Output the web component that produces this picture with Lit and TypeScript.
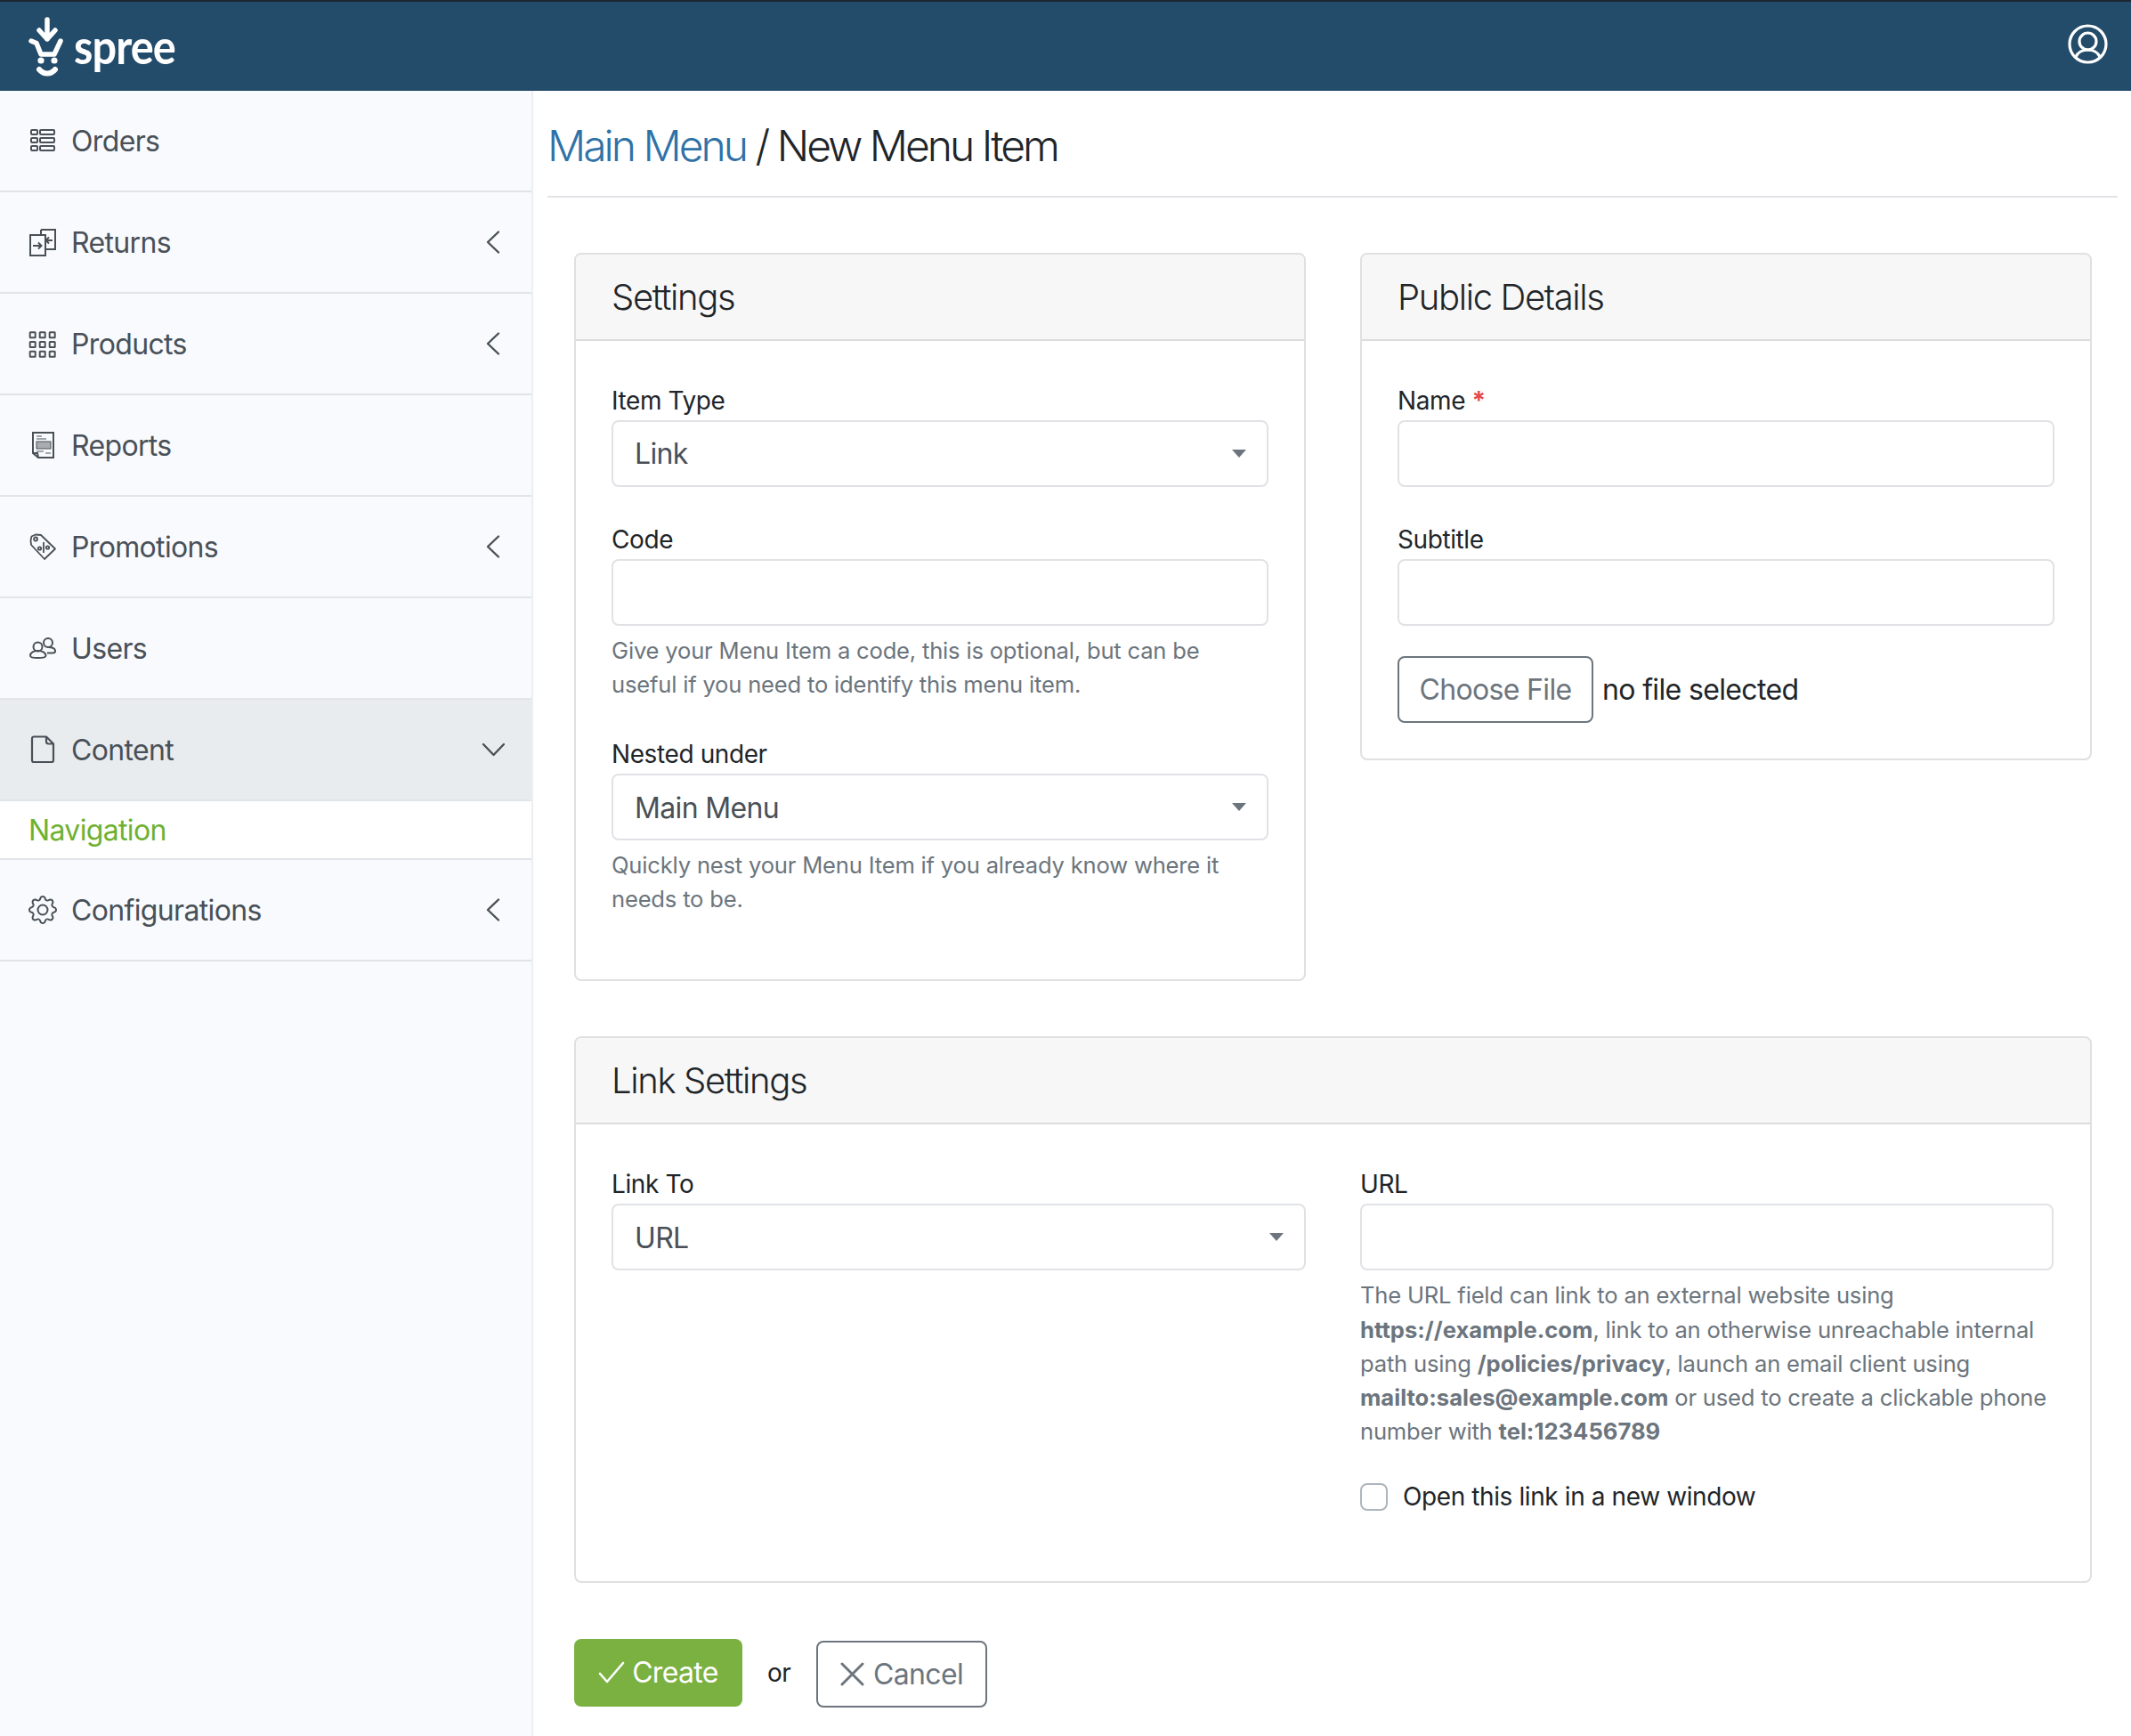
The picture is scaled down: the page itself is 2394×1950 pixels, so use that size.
import { LitElement, html, svg, css } from 'lit';
import { customElement } from 'lit/decorators.js';

// Icones do menu lateral, desenhados a 32x32
const icons: Record<string, unknown> = {
  orders: svg`<g fill="none" stroke="currentColor" stroke-width="2"><rect x="3" y="4" width="7" height="5" rx="1"/><rect x="13" y="4" width="16" height="5" rx="1"/><rect x="3" y="13" width="7" height="5" rx="1"/><rect x="13" y="13" width="16" height="5" rx="1"/><rect x="3" y="22" width="7" height="5" rx="1"/><rect x="13" y="22" width="16" height="5" rx="1"/></g>`,
  returns: svg`<g fill="none" stroke="currentColor" stroke-width="2"><path d="M14 2h16v22H19"/><path d="M14 2v6"/><rect x="2" y="8" width="17" height="23"/><path d="M5 20h9M11 16.500l3.500 3.500-3.500 3.500"/><path d="M27 14h-7M23 10.500 19.500 14l3.500 3.500"/></g>`,
  products: svg`<g fill="none" stroke="currentColor" stroke-width="2">
    ${[3.300, 14, 24.700].flatMap((y) => [1.700, 12.700, 23.700].map((x) => svg`<rect x=${x} y=${y} width="6" height="6" rx=".5"/>`))}
  </g>`,
  reports: svg`<g fill="none" stroke="currentColor" stroke-width="2"><path d="M5 2h23v28H11l-6-5z"/><path d="M5 25h5l1 5"/></g><g stroke="currentColor" stroke-width="1"><path d="M9 6h6M9 9h11M9 23h8M19 25h6"/><rect x="9" y="12" width="16" height="8" fill="currentColor" fill-opacity=".45"/></g>`,
  promotions: svg`<g fill="none" stroke="currentColor" stroke-width="1.800" stroke-linejoin="round"><path d="M3.500 4.500 8 2.500l6 .5L30 18.500 18 30 3 14l-.5-5z"/><circle cx="8" cy="7.500" r="2"/><path d="M17 11v12" /><circle cx="12.500" cy="18" r="1.700"/><circle cx="21.500" cy="17" r="1.700"/></g>`,
  users: svg`<g fill="none" stroke="currentColor" stroke-width="2"><circle cx="10.500" cy="14.500" r="5"/><path d="M2 24.500c0-3.500 4-5.500 8.500-5.500s9 2 9 5.500c0 2-3 2.500-9 2.500s-8.500-.5-8.500-2.500z"/><circle cx="22" cy="10" r="5"/><path d="M21 21.500h6c2.500 0 3.500-1 3-3-.8-2.500-4-3.500-7.500-3.500"/></g>`,
  content: svg`<path fill="none" stroke="currentColor" stroke-width="2.200" stroke-linejoin="round" d="M6 1.500h14l8 8V28a2 2 0 0 1-2 2H6a2 2 0 0 1-2-2V3.500a2 2 0 0 1 2-2zM20 1.500V7a2.500 2.500 0 0 0 2.500 2.500H28"/>`,
  configurations: svg`<g transform="scale(2)" fill="currentColor"><path d="M8 4.754a3.246 3.246 0 1 0 0 6.492 3.246 3.246 0 0 0 0-6.492zM5.754 8a2.246 2.246 0 1 1 4.492 0 2.246 2.246 0 0 1-4.492 0z"/><path d="M9.796 1.343c-.527-1.790-3.065-1.790-3.592 0l-.094.319a.873.873 0 0 1-1.255.520l-.292-.160c-1.640-.892-3.433.902-2.540 2.541l.159.292a.873.873 0 0 1-.520 1.255l-.319.094c-1.790.527-1.790 3.065 0 3.592l.319.094a.873.873 0 0 1 .520 1.255l-.160.292c-.892 1.640.901 3.434 2.541 2.540l.292-.159a.873.873 0 0 1 1.255.520l.094.319c.527 1.790 3.065 1.790 3.592 0l.094-.319a.873.873 0 0 1 1.255-.520l.292.160c1.640.893 3.434-.902 2.540-2.541l-.159-.292a.873.873 0 0 1 .520-1.255l.319-.094c1.790-.527 1.790-3.065 0-3.592l-.319-.094a.873.873 0 0 1-.520-1.255l.160-.292c.893-1.640-.902-3.433-2.541-2.540l-.292.159a.873.873 0 0 1-1.255-.520l-.094-.319zm-2.633.283c.246-.835 1.428-.835 1.674 0l.094.319a1.873 1.873 0 0 0 2.693 1.115l.291-.160c.764-.415 1.600.420 1.184 1.185l-.159.292a1.873 1.873 0 0 0 1.116 2.692l.318.094c.835.246.835 1.428 0 1.674l-.319.094a1.873 1.873 0 0 0-1.115 2.693l.160.291c.415.764-.420 1.600-1.185 1.184l-.291-.159a1.873 1.873 0 0 0-2.693 1.116l-.094.318c-.246.835-1.428.835-1.674 0l-.094-.319a1.873 1.873 0 0 0-2.692-1.115l-.292.160c-.764.415-1.600-.420-1.184-1.185l.159-.291A1.873 1.873 0 0 0 1.945 8.930l-.319-.094c-.835-.246-.835-1.428 0-1.674l.319-.094A1.873 1.873 0 0 0 3.060 4.377l-.160-.292c-.415-.764.420-1.600 1.185-1.184l.292.159a1.873 1.873 0 0 0 2.692-1.115l.094-.319z"/></g>`,
};

// Itens do menu: arrow indica se ha chevron a direita
const menu = [
  { icon: 'orders', label: 'Orders', arrow: '' },
  { icon: 'returns', label: 'Returns', arrow: 'left' },
  { icon: 'products', label: 'Products', arrow: 'left' },
  { icon: 'reports', label: 'Reports', arrow: '' },
  { icon: 'promotions', label: 'Promotions', arrow: 'left' },
  { icon: 'users', label: 'Users', arrow: '' },
  { icon: 'content', label: 'Content', arrow: 'down', active: true, sub: 'Navigation' },
  { icon: 'configurations', label: 'Configurations', arrow: 'left' },
];

@customElement('app-root')
export class AppRoot extends LitElement {
  static styles = css`
    :host {
      display: block;
      min-height: 100vh;
      font-family: Inter, "Liberation Sans", sans-serif;
      font-size: 32px;
      line-height: 1.5;
      letter-spacing: -0.65px;
      color: #212529;
      background: #fff;
    }

    * { box-sizing: border-box; }

    .topbar {
      height: 102px;
      background: #234b6a;
      border-top: 2px solid #1c2631;
      display: flex;
      align-items: flex-start;
      justify-content: space-between;
      padding: 16px 26px 0 32px;
      color: #fff;
    }
    .logo { display: flex; align-items: flex-start; }
    .logo svg { width: 40px; height: 68px; flex: none; display: block; }
    .logo-text {
      font-family: Lato, sans-serif;
      font-size: 54px;
      line-height: 68px;
      letter-spacing: -1px;
      margin: 0 0 0 11px;
      font-weight: 700;
      transform: scaleX(0.9);
      transform-origin: left;
    }
    .avatar { width: 45px; height: 45px; margin-top: 9px; display: block; }

    .page { display: flex; min-height: 1848px; }

    .sidebar {
      width: 599px;
      flex: none;
      background: #f8fafd;
      border-right: 2px solid #eceef1;
    }
    .nav-item {
      height: 114px;
      display: flex;
      align-items: center;
      padding: 0 30px 0 32px;
      color: #495057;
      border-bottom: 2px solid #e1e4e8;
    }
    .nav-item.active { background: #e9ecef; }
    .nav-icon { width: 32px; height: 32px; flex: none; margin-right: 16px; display: block; }
    .nav-label { flex: 1; padding-top: 2px; }
    .chevron { width: 26px; height: 30px; display: block; }
    .sub-item {
      height: 66px;
      display: flex;
      align-items: center;
      padding-left: 32px;
      padding-top: 1px;
      background: #fff;
      color: #6eb131;
      border-bottom: 2px solid #e1e4e8;
    }

    .main { flex: 1; padding: 0 15px 0 16px; }
    .page-title {
      margin: 0;
      padding: 33px 0 27px;
      font-size: 48px;
      line-height: 1.2;
      font-weight: 350;
      letter-spacing: -3px;
      border-bottom: 2px solid #e1e3e6;
    }
    .page-title a { color: #2f72a7; text-decoration: none; }

    .form { padding: 62px 29px 0 30px; }
    .top-row {
      display: grid;
      grid-template-columns: 822px 822px;
      column-gap: 61px;
      align-items: start;
      margin-bottom: 62px;
    }

    .card {
      border: 2px solid #e0e0e0;
      border-radius: 8px;
      background: #fff;
    }
    .card-header {
      padding: 24px 40px 23px;
      background: #f7f7f7;
      border-bottom: 2px solid #dcdcdc;
      border-radius: 6px 6px 0 0;
      font-size: 40px;
      line-height: 1.2;
      font-weight: 350;
      letter-spacing: -1.35px;
    }
    .card-body { padding: 46px 40px 71px 40px; }
    .public .card-body { padding-bottom: 40px; }
    .public .group:nth-child(2) { margin-bottom: 34px; }
    .link-settings .card-body {
      display: grid;
      grid-template-columns: 780px 779px;
      column-gap: 61px;
      padding-right: 0;
      padding-bottom: 74px;
    }

    .group { margin-bottom: 38px; }
    .group:last-child { margin-bottom: 0; }
    label, .label {
      display: block;
      font-size: 28px;
      line-height: 42px;
      letter-spacing: -0.4px;
      margin-bottom: 1px;
    }
    .req { color: #e5484d; font-weight: 700; }

    .control, .select {
      display: flex;
      align-items: center;
      width: 100%;
      height: 75px;
      padding: 0 24px;
      border: 2px solid #e0e2e5;
      border-radius: 8px;
      background: #fff;
      font: inherit;
      color: #495057;
      outline: none;
    }
    .select { justify-content: space-between; padding: 2px 23px 0 24px; }
    .caret {
      width: 0;
      height: 0;
      margin-top: -2px;
      border-left: 8px solid transparent;
      border-right: 8px solid transparent;
      border-top: 9px solid #6c757d;
    }

    .help {
      margin: 9px 0 0;
      font-size: 25.600px;
      line-height: 38.200px;
      letter-spacing: -0.2px;
      color: #6c757d;
    }
    .help strong { font-weight: 700; letter-spacing: 0; }

    .file-row {
      display: flex;
      align-items: center;
      gap: 10px;
    }
    .file-row span { padding-top: 2px; }
    .file-btn {
      height: 75px;
      width: 220px;
      padding: 2px 0 0;
      border: 2px solid #6c757d;
      border-radius: 8px;
      background: #fff;
      font: inherit;
      letter-spacing: inherit;
      color: #6c757d;
    }

    .check {
      display: flex;
      align-items: center;
      margin: 33px 0 0;
      font-size: 28px;
      line-height: 42px;
      letter-spacing: -0.4px;
    }
    .check input {
      appearance: none;
      width: 31px;
      height: 31px;
      margin: 0 17px 0 0;
      border: 2px solid #adb5bd;
      border-radius: 8px;
      background: #fff;
    }

    .actions {
      display: flex;
      align-items: flex-start;
      margin-top: 63px;
      padding-bottom: 34px;
    }
    .btn {
      display: flex;
      align-items: center;
      justify-content: center;
      border-radius: 8px;
      font: inherit;
      letter-spacing: inherit;
      padding: 0;
    }
    .btn svg { display: block; flex: none; }
    .btn-create {
      width: 189px;
      height: 76px;
      gap: 8px;
      background: #7ab141;
      border: none;
      color: #fff;
    }
    .btn-cancel {
      width: 192px;
      height: 75px;
      margin-top: 2px;
      gap: 10px;
      background: #fff;
      border: 2px solid #6c757d;
      color: #6c757d;
    }
    .or {
      width: 83px;
      padding-left: 28px;
      font-size: 28px;
      line-height: 76px;
    }
  `;

  renderChevron(dir: string) {
    if (dir === 'down') {
      return html`<svg class="chevron" viewBox="0 0 26 30" fill="none" stroke="currentColor" stroke-width="2.400" stroke-linecap="round" stroke-linejoin="round"><path d="M2 9l11.500 12L25 9"/></svg>`;
    }
    return html`<svg class="chevron" viewBox="0 0 26 30" fill="none" stroke="currentColor" stroke-width="2.400" stroke-linecap="round" stroke-linejoin="round"><path d="M19 3.500 7 15l12 11.500"/></svg>`;
  }

  renderSidebar() {
    return html`
      <nav class="sidebar">
        ${menu.map(
          (item) => html`
            <div class="nav-item ${item.active ? 'active' : ''}">
              <svg class="nav-icon" viewBox="0 0 32 32">${icons[item.icon]}</svg>
              <span class="nav-label">${item.label}</span>
              ${item.arrow ? this.renderChevron(item.arrow) : ''}
            </div>
            ${item.sub ? html`<div class="sub-item">${item.sub}</div>` : ''}
          `
        )}
      </nav>
    `;
  }

  renderSelect(label: string, value: string) {
    return html`
      <div class="label">${label}</div>
      <div class="select"><span>${value}</span><span class="caret"></span></div>
    `;
  }

  render() {
    return html`
      <header class="topbar">
        <div class="logo">
          <svg viewBox="0 0 40 68" fill="none" stroke="#fff" stroke-linecap="round" stroke-linejoin="round">
            <path stroke-width="5.500" d="M21 4v22M12 16l9 10 9-10"/>
            <path stroke-width="5.500" d="M3 28l6 2.500L14 43h15l7-15"/>
            <circle cx="14" cy="50" r="3.600" fill="#fff" stroke="none"/>
            <circle cx="29" cy="50" r="3.600" fill="#fff" stroke="none"/>
            <path stroke-width="6" d="M12 60c5 6 13 6 18 0"/>
          </svg>
          <p class="logo-text">spree</p>
        </div>
        <svg class="avatar" viewBox="0 0 45 45" fill="none" stroke="#fff" stroke-width="3.200">
          <circle cx="22.500" cy="22.500" r="20.500"/>
          <circle cx="22.500" cy="19.500" r="9.500"/>
          <path d="M9 37c2-5 7.500-8 13.500-8s11.500 3 13.500 8"/>
        </svg>
      </header>

      <div class="page">
        ${this.renderSidebar()}
        <main class="main">
          <h1 class="page-title"><a href="#">Main Menu</a> / New Menu Item</h1>

          <div class="form">
            <div class="top-row">
              <section class="card">
                <div class="card-header">Settings</div>
                <div class="card-body">
                  <div class="group">${this.renderSelect('Item Type', 'Link')}</div>
                  <div class="group">
                    <label>Code</label>
                    <input class="control" type="text" />
                    <p class="help">Give your Menu Item a code, this is optional, but can be useful if you need to identify this menu item.</p>
                  </div>
                  <div class="group">
                    ${this.renderSelect('Nested under', 'Main Menu')}
                    <p class="help">Quickly nest your Menu Item if you already know where it needs to be.</p>
                  </div>
                </div>
              </section>

              <section class="card public">
                <div class="card-header">Public Details</div>
                <div class="card-body">
                  <div class="group">
                    <label>Name <span class="req">*</span></label>
                    <input class="control" type="text" />
                  </div>
                  <div class="group">
                    <label>Subtitle</label>
                    <input class="control" type="text" />
                  </div>
                  <div class="file-row">
                    <button class="file-btn">Choose File</button>
                    <span>no file selected</span>
                  </div>
                </div>
              </section>
            </div>

            <section class="card link-settings">
              <div class="card-header">Link Settings</div>
              <div class="card-body">
                <div>${this.renderSelect('Link To', 'URL')}</div>
                <div>
                  <label>URL</label>
                  <input class="control" type="text" />
                  <p class="help">
                    The URL field can link to an external website using <strong>https://example.com</strong>, link to an otherwise unreachable internal path using <strong>/policies/privacy</strong>, launch an email client using <strong>mailto:sales@example.com</strong> or used to create a clickable phone number with <strong>tel:123456789</strong>
                  </p>
                  <div class="check"><input type="checkbox" /><span>Open this link in a new window</span></div>
                </div>
              </div>
            </section>

            <div class="actions">
              <button class="btn btn-create">
                <svg width="30" height="26" viewBox="0 0 30 26" fill="none" stroke="currentColor" stroke-width="2.600" stroke-linecap="round" stroke-linejoin="round"><path d="M2 14l8 9L28 2"/></svg>
                <span>Create</span>
              </button>
              <span class="or">or</span>
              <button class="btn btn-cancel">
                <svg width="27" height="27" viewBox="0 0 27 27" fill="none" stroke="currentColor" stroke-width="3" stroke-linecap="round"><path d="M2 2l23 23M25 2 2 25"/></svg>
                <span>Cancel</span>
              </button>
            </div>
          </div>
        </main>
      </div>
    `;
  }
}
